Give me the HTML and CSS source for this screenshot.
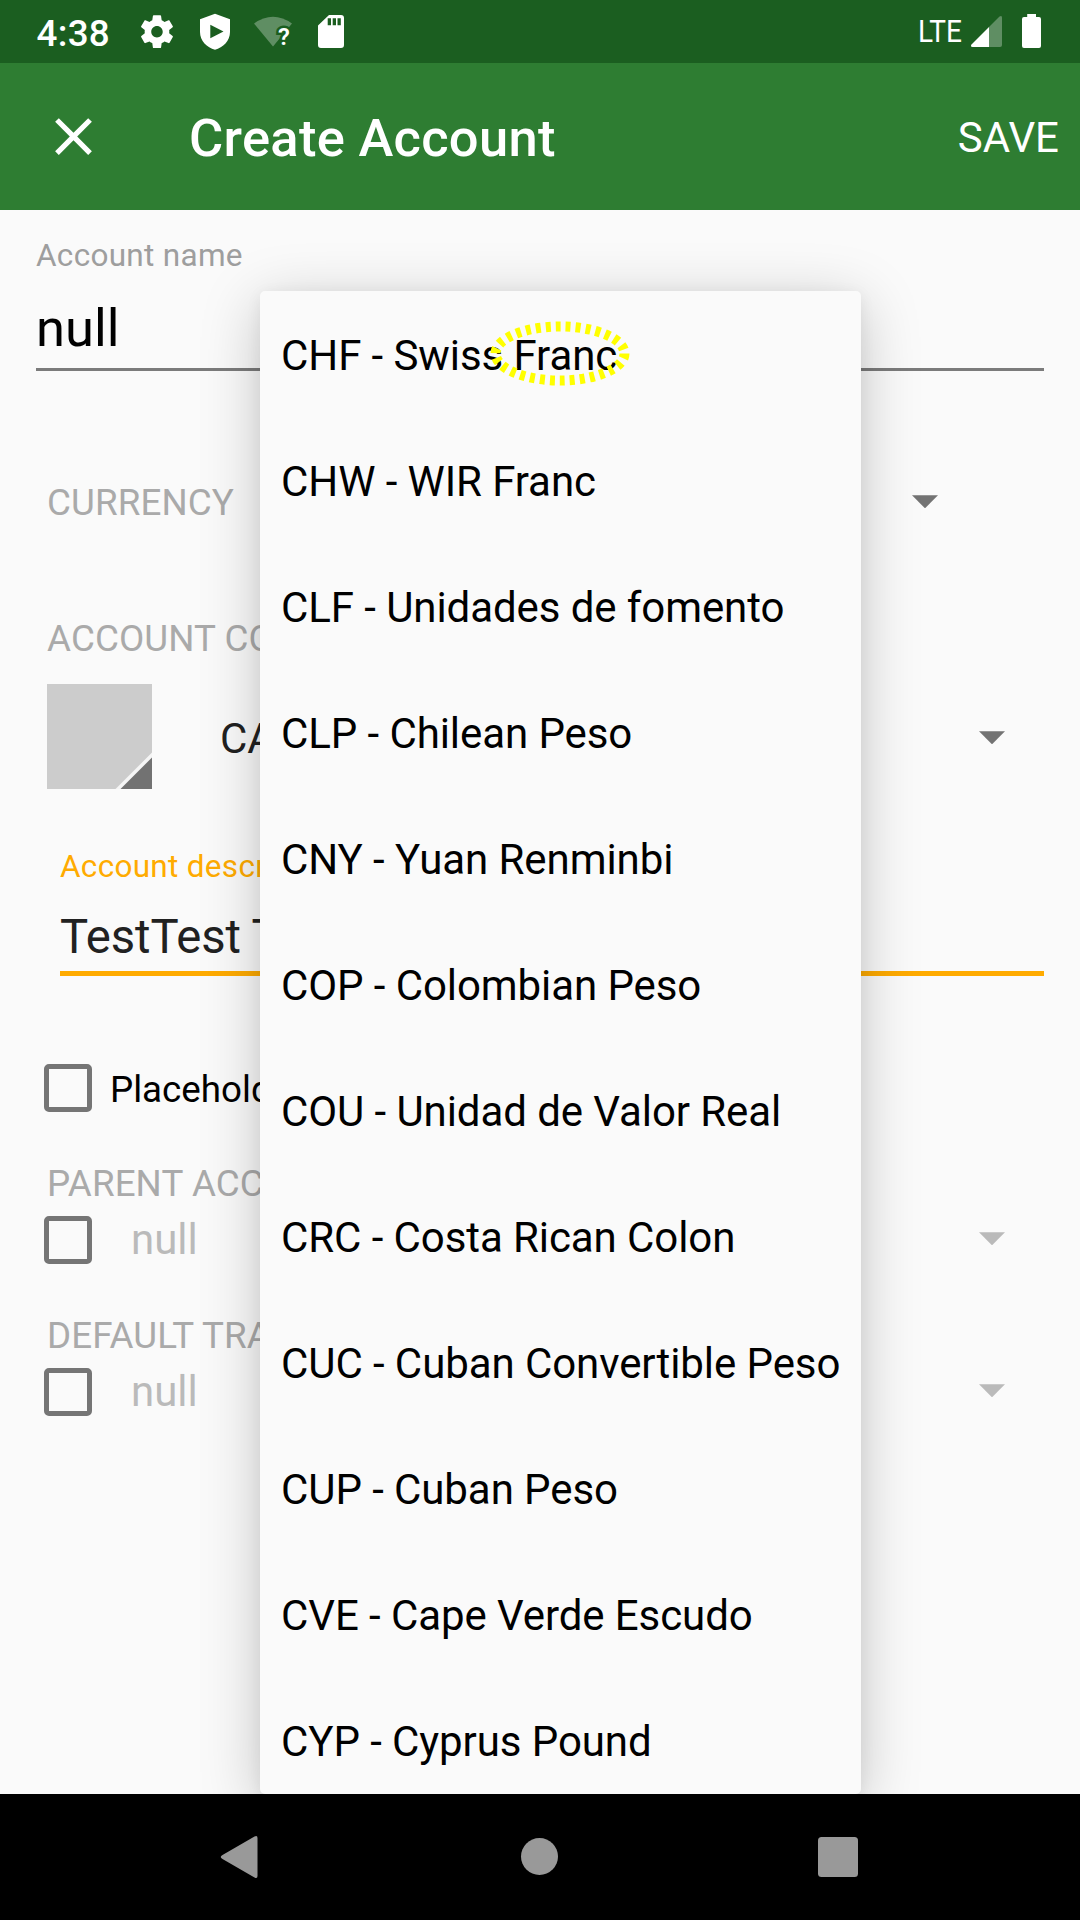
FILE: index.html
```
<!DOCTYPE html>
<html lang="en">
<head>
<meta charset="utf-8">
<title>Create Account</title>
<link rel="stylesheet" href="styles.css">
</head>
<body>
<div class="screen">
  <header class="status">
    <span class="clock">4:38</span>
    <svg class="status-icons" viewBox="0 0 230 63" width="230" height="63">
      <path fill="#fff" fill-rule="evenodd" transform="translate(7.3 12) scale(1.64)" d="M19.43 12.98c.04-.32.07-.64.07-.98s-.03-.66-.07-.98l2.11-1.65c.19-.15.24-.42.12-.64l-2-3.46c-.12-.22-.39-.3-.61-.22l-2.49 1c-.52-.4-1.08-.73-1.69-.98l-.38-2.65C14.46 2.18 14.25 2 14 2h-4c-.25 0-.46.18-.49.42l-.38 2.65c-.61.25-1.17.59-1.69.98l-2.49-1c-.23-.09-.49 0-.61.22l-2 3.46c-.13.22-.07.49.12.64l2.11 1.65c-.04.32-.07.65-.07.98s.03.66.07.98l-2.11 1.65c-.19.15-.24.42-.12.64l2 3.46c.12.22.39.3.61.22l2.49-1c.52.4 1.08.73 1.69.98l.38 2.65c.03.24.24.42.49.42h4c.25 0 .46-.18.49-.42l.38-2.65c.61-.25 1.17-.59 1.69-.98l2.49 1c.23.09.49 0 .61-.22l2-3.46c.12-.22.07-.49-.12-.64l-2.11-1.65zM12 15.5c-1.93 0-3.5-1.57-3.5-3.5s1.57-3.5 3.5-3.5 3.5 1.57 3.5 3.5-1.57 3.5-3.5 3.5z"/>
      <path fill="#fff" fill-rule="evenodd" d="M85 13.7 100 19.3V32C100 41 93 47.5 85 49.7 77 47.5 70 41 70 32V19.3ZM80.3 24.7V38.3L93.5 31.5Z"/>
      <path fill="#fff" fill-opacity=".3" d="M124 23.5Q143 10 162 23.5L143 46.500Z"/>
      <text class="wifi-mark" x="148" y="45">?</text>
      <path fill="#fff" fill-rule="evenodd" d="M199 15H211Q214 15 214 18V45Q214 48 211 48H191Q188 48 188 45V25.500ZM197.700 18.300V25.300H201V18.300ZM202.700 18.300V25.300H206V18.300ZM207.500 18.300V25.300H210.800V18.300Z"/>
    </svg>
    <span class="network">LTE</span>
    <svg class="signal" viewBox="0 0 80 63" width="80" height="63">
      <path fill="#fff" fill-opacity=".3" d="M19 27 29.500 16.500Q32 15 32 17.500V45Q32 47 30 47H19Z"/>
      <path fill="#fff" d="M19 27V47H2.500Q0 46.500 1.500 44.500Z"/>
      <path fill="#fff" d="M57.200 14H66V17H69Q71 17 71 19V46Q71 48 69 48H54Q52 48 52 46V19Q52 17 54 17H57.200Z"/>
    </svg>
  </header>
  <nav class="appbar">
    <svg class="close" viewBox="0 0 24 24" width="63" height="63"><path fill="#fff" d="M19 6.410 17.590 5 12 10.590 6.410 5 5 6.410 10.590 12 5 17.590 6.410 19 12 13.410 17.590 19 19 17.590 13.410 12z"/></svg>
    <h1 class="title">Create Account</h1>
    <span class="save">SAVE</span>
  </nav>
  <main class="form">
    <section class="field name-field">
      <label class="hint">Account name</label>
      <div class="name-value">null</div>
    </section>
    <section class="row currency">
      <span class="caption">CURRENCY</span>
      <svg class="arrow" viewBox="0 0 26 13" width="26" height="13"><path d="M0 .300H26L13 13.300Z"/></svg>
    </section>
    <div class="caption color-caption">ACCOUNT COLOR &amp; TYPE</div>
    <section class="row type-row">
      <svg class="swatch" viewBox="0 0 105 105" width="105" height="105">
        <path fill="#ccc" d="M0 0H105V105H0Z"/>
        <path fill="#f5f5f5" d="M105 68.500V105H68.500Z"/>
        <path fill="#727272" d="M105 73.500V105H73.500Z"/>
      </svg>
      <span class="type-value">CASH</span>
      <svg class="arrow" viewBox="0 0 26 13" width="26" height="13"><path d="M0 .300H26L13 13.300Z"/></svg>
    </section>
    <section class="field description-field">
      <label class="hint accent">Account description</label>
      <div class="description-value">TestTest Test</div>
    </section>
    <section class="row check-row">
      <span class="box"></span>
      <span class="check-label">Placeholder account</span>
    </section>
    <div class="caption parent-caption">PARENT ACCOUNT</div>
    <section class="row check-row option-row">
      <span class="box"></span>
      <span class="option-value">null</span>
      <svg class="arrow faded" viewBox="0 0 26 13" width="26" height="13"><path d="M0 .300H26L13 13.300Z"/></svg>
    </section>
    <div class="caption transfer-caption">DEFAULT TRANSFER ACCOUNT</div>
    <section class="row check-row option-row">
      <span class="box"></span>
      <span class="option-value">null</span>
      <svg class="arrow faded" viewBox="0 0 26 13" width="26" height="13"><path d="M0 .300H26L13 13.300Z"/></svg>
    </section>
    <ul class="menu">
      <li>CHF - Swiss Franc</li>
      <li>CHW - WIR Franc</li>
      <li>CLF - Unidades de fomento</li>
      <li>CLP - Chilean Peso</li>
      <li>CNY - Yuan Renminbi</li>
      <li>COP - Colombian Peso</li>
      <li>COU - Unidad de Valor Real</li>
      <li>CRC - Costa Rican Colon</li>
      <li>CUC - Cuban Convertible Peso</li>
      <li>CUP - Cuban Peso</li>
      <li>CVE - Cape Verde Escudo</li>
      <li>CYP - Cyprus Pound</li>
    </ul>
    <svg class="marker" viewBox="0 0 140 66" width="140" height="66"><ellipse cx="70" cy="32.500" rx="64.500" ry="27"/></svg>
  </main>
  <footer class="navbar">
    <svg viewBox="0 0 40 44" width="40" height="44"><path d="M2.500 20 34.500 1.500Q37.500 0 37.500 3V41Q37.500 44 34.500 42.500L2.500 24Q-1 22 2.500 20Z"/></svg>
    <svg viewBox="0 0 38 38" width="38" height="38"><circle cx="19.500" cy="18.500" r="18.500"/></svg>
    <svg viewBox="0 0 40 40" width="40" height="40"><rect width="40" height="40" rx="3.500"/></svg>
  </footer>
</div>
</body>
</html>
```
FILE: styles.css
```
* { box-sizing: border-box; margin: 0; padding: 0; }
body { width: 1080px; height: 1920px; overflow: hidden; font-family: Roboto, sans-serif; background: #fafafa; color: #000; }
svg { display: block; flex: none; }
.screen { display: flex; flex-direction: column; width: 1080px; height: 1920px; white-space: nowrap; }
.status { display: flex; height: 63px; background: #1b5e20; color: #fff; padding-left: 36.5px; }
.clock { width: 93.5px; font-size: 36.75px; font-weight: 500; line-height: 67px; letter-spacing: .3px; }
.wifi-mark { font-size: 24px; font-weight: 600; fill: #fff; stroke: #1b5e20; stroke-width: 5px; paint-order: stroke; }
.network { margin-left: auto; width: 52px; font-size: 32px; line-height: 62px; transform: scaleX(.875); transform-origin: left; }
.signal { margin-right: 30px; }
.appbar { display: flex; align-items: center; height: 147px; padding: 0 21px 0 42px; background: #2e7d32; color: #fff; }
.title { margin-left: 84px; font-size: 52.5px; font-weight: 500; line-height: 147px; padding-top: 3px; letter-spacing: .28px; }
.save { margin-left: auto; font-size: 42px; padding-top: 2px; }
.form { position: relative; height: 1584px; overflow: hidden; }
.field { display: flex; flex-direction: column; }
.name-field { height: 161px; margin: 0 36px; border-bottom: 3px solid #7b7b7b; padding-top: 27px; }
.hint { font-size: 31.5px; line-height: 37px; color: #9e9e9e; letter-spacing: .3px; }
.name-value { font-size: 52.5px; line-height: 62px; margin-top: 23px; }
.row { display: flex; align-items: center; }
.caption { font-size: 36.75px; line-height: 44px; color: #aaa; padding-left: 47px; letter-spacing: .1px; }
.arrow { fill: #737373; margin-left: auto; }
.arrow.faded { fill: #bababa; margin-bottom: 3px; }
.currency { height: 44px; margin-top: 110px; padding-right: 142.5px; }
.currency .arrow { margin-bottom: 4px; }
.color-caption { margin-top: 92px; }
.type-row { height: 105px; margin-top: 23px; padding: 0 75.5px 0 47px; }
.type-row .arrow { margin-top: 2px; }
.type-value { margin-left: 68px; font-size: 42px; color: #212121; padding-top: 3px; }
.description-field { height: 143px; margin: 44px 36px 0 60px; border-bottom: 5px solid #ffab00; }
.hint.accent { color: #ffab00; margin-top: 15px; }
.description-value { font-size: 47.25px; line-height: 56px; color: #212121; margin-top: 24px; letter-spacing: -.1px; }
.check-row { height: 48px; padding: 0 75.5px 0 44px; }
.description-field + .check-row { margin-top: 88px; }
.box { width: 48px; height: 48px; border: 5.25px solid #757575; border-radius: 5px; flex: none; }
.check-label { margin-left: 18px; font-size: 36.75px; padding-top: 3px; }
.option-value { margin-left: 39px; font-size: 42px; color: #bababa; line-height: 48px; }
.parent-caption, .transfer-caption { margin-top: 50px; }
.parent-caption + .check-row, .transfer-caption + .check-row { margin-top: 10px; }
.menu { position: absolute; left: 260px; top: 81px; width: 601px; height: 1503px; overflow: hidden; list-style: none; background: #fafafa; border-radius: 5px; box-shadow: 0 12px 60px rgba(0,0,0,.22), 0 3px 16px rgba(0,0,0,.06); }
.menu li { height: 126px; padding: 3px 0 0 21px; font-size: 42px; line-height: 123px; letter-spacing: -.08px; }
.marker { position: absolute; left: 490px; top: 111px; fill: none; stroke: #ff0; stroke-width: 10px; stroke-dasharray: 5 5; }
.navbar { display: flex; align-items: center; height: 126px; padding: 0 222px 0 219.5px; justify-content: space-between; background: #000; fill: #999; }
```
